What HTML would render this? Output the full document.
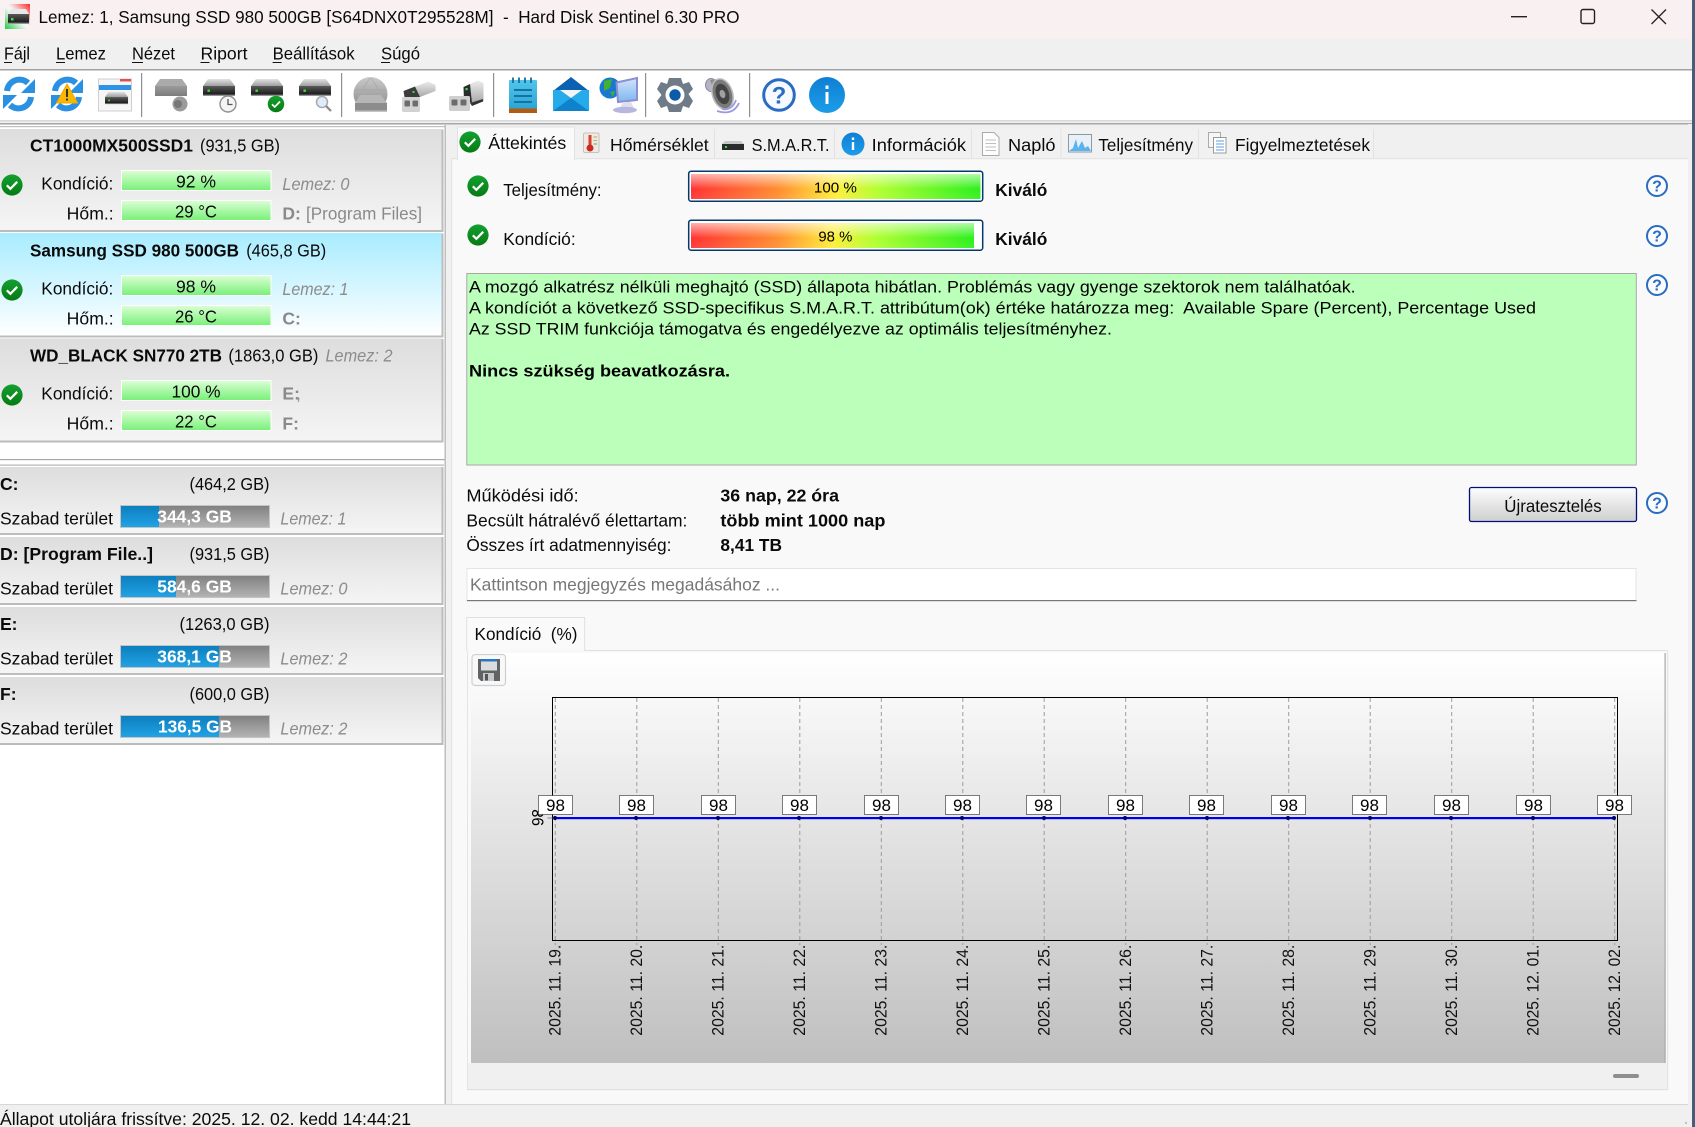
<!DOCTYPE html>
<html lang="hu"><head><meta charset="utf-8"><title>Hard Disk Sentinel</title>
<style>
html,body{margin:0;padding:0;width:1695px;height:1127px;overflow:hidden;background:#f0f0f0}
svg{display:block;position:absolute;left:0;top:0}
text{font-family:"Liberation Sans",sans-serif;fill:#0a0a0a;font-size:17.5px;white-space:pre}
.b{font-weight:700}
.g{fill:#8a8a8a}
.i{font-style:italic;fill:#8c8c8c}
.gb{font-weight:700;fill:#8a8a8a}
.w{fill:#fff;font-weight:700}
.a{font-size:16.6px;fill:#000}
.d{font-size:16.5px;fill:#111}
.l{font-size:17px;fill:#000}
.h{font-weight:700;fill:#2a6cc0;font-size:16px}
</style></head><body>
<svg width="1695" height="1127" viewBox="0 0 1695 1127" xmlns="http://www.w3.org/2000/svg">
<defs>
<linearGradient id="gb" x1="0" y1="0" x2="0" y2="1"><stop offset="0" stop-color="#dcffd6"/><stop offset="1" stop-color="#78f078"/></linearGradient>
<linearGradient id="it" x1="0" y1="0" x2="0" y2="1"><stop offset="0" stop-color="#dddddd"/><stop offset="1" stop-color="#f5f5f5"/></linearGradient>
<linearGradient id="sel" x1="0" y1="0" x2="0" y2="1"><stop offset="0" stop-color="#a8ecff"/><stop offset="1" stop-color="#ffffff"/></linearGradient>
<linearGradient id="gr" x1="0" y1="0" x2="0" y2="1"><stop offset="0" stop-color="#808080"/><stop offset="1" stop-color="#b4b4b4"/></linearGradient>
<linearGradient id="bl" x1="0" y1="0" x2="0" y2="1"><stop offset="0" stop-color="#0c7fbf"/><stop offset="1" stop-color="#22a2e4"/></linearGradient>
<linearGradient id="chart" x1="0" y1="0" x2="0" y2="1"><stop offset="0" stop-color="#ffffff"/><stop offset="1" stop-color="#bfbfbf"/></linearGradient>
<linearGradient id="btn" x1="0" y1="0" x2="0" y2="1"><stop offset="0" stop-color="#fdfdfd"/><stop offset="1" stop-color="#cfcfcf"/></linearGradient>
<linearGradient id="rg" x1="0" y1="0" x2="1" y2="0"><stop offset="0" stop-color="#ff3232"/><stop offset=".3" stop-color="#ff8c30"/><stop offset=".5" stop-color="#ffee38"/><stop offset=".65" stop-color="#b0ff30"/><stop offset="1" stop-color="#2cf01c"/></linearGradient>
<linearGradient id="sh" x1="0" y1="0" x2="0" y2="1"><stop offset="0" stop-color="#fff" stop-opacity=".62"/><stop offset=".6" stop-color="#fff" stop-opacity="0"/><stop offset="1" stop-color="#fff" stop-opacity=".08"/></linearGradient>
<linearGradient id="dt" x1="0" y1="0" x2="0" y2="1"><stop offset="0" stop-color="#e2e2e2"/><stop offset="1" stop-color="#9e9e9e"/></linearGradient>
<linearGradient id="db" x1="0" y1="0" x2="0" y2="1"><stop offset="0" stop-color="#5a5a5a"/><stop offset=".8" stop-color="#1e1e1e"/><stop offset="1" stop-color="#bbb"/></linearGradient>
<linearGradient id="dbg" x1="0" y1="0" x2="0" y2="1"><stop offset="0" stop-color="#9a9a9a"/><stop offset="1" stop-color="#7c7c7c"/></linearGradient>
<linearGradient id="ok" x1="0" y1="0" x2="0" y2="1"><stop offset="0" stop-color="#14a030"/><stop offset="1" stop-color="#067a14"/></linearGradient>
<linearGradient id="inf" x1="0" y1="0" x2="0" y2="1"><stop offset="0" stop-color="#0f7fd4"/><stop offset="1" stop-color="#1c9de8"/></linearGradient>
<linearGradient id="note" x1="0" y1="0" x2="0" y2="1"><stop offset="0" stop-color="#52c6ea"/><stop offset="1" stop-color="#2ba4d6"/></linearGradient>
<linearGradient id="tri" x1="0" y1="1" x2="1" y2="0"><stop offset="0" stop-color="#22cc44"/><stop offset=".45" stop-color="#f4f4f4"/><stop offset=".55" stop-color="#f4f4f4"/><stop offset="1" stop-color="#ff2a2a"/></linearGradient>
<linearGradient id="glb" x1="0" y1="0" x2="0" y2="1"><stop offset="0" stop-color="#cacaca"/><stop offset="1" stop-color="#858585"/></linearGradient>
<linearGradient id="scr" x1="0" y1="0" x2="0" y2="1"><stop offset="0" stop-color="#d0e4fb"/><stop offset="1" stop-color="#7fb6f0"/></linearGradient>
<linearGradient id="box" x1="0" y1="0" x2="0" y2="1"><stop offset="0" stop-color="#ececec"/><stop offset="1" stop-color="#a8a8a8"/></linearGradient>
<g id="chk"><circle r="10.6" fill="url(#ok)"/><path d="M-5.2 .3L-1.6 3.8L5.2-3.2" fill="none" stroke="#fff" stroke-width="2.2"/></g>
<g id="disk"><path d="M5 0H27L32 7H0Z" fill="url(#dt)"/><rect y="7" width="32" height="10" fill="url(#db)"/><rect x="4.5" y="10.5" width="2.4" height="2.4" fill="#35e23c"/></g>
<g id="ref"><path d="M7 91A12.5 12.5 0 0 1 28 83" fill="none" stroke="#2a90e2" stroke-width="6"/><path d="M35 79V93H21Z" fill="#2a90e2"/><path d="M31 97A12.5 12.5 0 0 1 10 105" fill="none" stroke="#2a90e2" stroke-width="6"/><path d="M3 109V95H17Z" fill="#2a90e2"/></g>
</defs>

<!-- title bar -->
<rect width="1695" height="1127" fill="#f0f0f0"/>
<rect width="1692" height="39" fill="#f8f0f1"/>
<rect x="5" y="4" width="25" height="25" fill="url(#tri)"/>
<g transform="translate(7 9)"><path d="M4 0H19L22 5H1Z" fill="#e8e8e8"/><rect x="1" y="5" width="21" height="10" fill="url(#db)"/><rect x="4" y="9" width="2.5" height="2.5" fill="#35e23c"/></g>
<text x="38.500" y="23" textLength="701" lengthAdjust="spacingAndGlyphs">Lemez: 1, Samsung SSD 980 500GB [S64DNX0T295528M]  -  Hard Disk Sentinel 6.30 PRO</text>
<rect x="1511" y="16" width="16" height="1.4" fill="#222"/>
<rect x="1581" y="9.5" width="13.5" height="14" rx="2" fill="none" stroke="#222" stroke-width="1.4"/>
<path d="M1651.5 9.500L1666 24M1666 9.500L1651.5 24" stroke="#222" stroke-width="1.3" fill="none"/>

<!-- menu -->
<rect y="39" width="1692" height="30" fill="#f0f0f0"/>
<text x="4" y="59.500" textLength="26" lengthAdjust="spacingAndGlyphs">Fájl</text><rect x="4" y="62" width="8" height="1" fill="#111"/>
<text x="56" y="59.500" textLength="50" lengthAdjust="spacingAndGlyphs">Lemez</text><rect x="56" y="62" width="9" height="1" fill="#111"/>
<text x="132" y="59.500" textLength="43" lengthAdjust="spacingAndGlyphs">Nézet</text><rect x="132" y="62" width="11" height="1" fill="#111"/>
<text x="200.500" y="59.500" textLength="47" lengthAdjust="spacingAndGlyphs">Riport</text><rect x="200.500" y="62" width="9" height="1" fill="#111"/>
<text x="272.600" y="59.500" textLength="82" lengthAdjust="spacingAndGlyphs">Beállítások</text><rect x="272.600" y="62" width="9" height="1" fill="#111"/>
<text x="381" y="59.500" textLength="39" lengthAdjust="spacingAndGlyphs">Súgó</text><rect x="381" y="62" width="9" height="1" fill="#111"/>

<!-- toolbar -->
<rect y="69" width="1692" height="1.5" fill="#a2a2a2"/>
<rect y="70.5" width="1692" height="50" fill="#fff"/>
<rect y="120" width="1692" height="1.5" fill="#d8d8d8"/>
<rect y="123" width="1692" height="1.5" fill="#a8a8a8"/>
<use href="#ref"/>
<use href="#ref" x="48"/>
<path d="M67 84L77.500 103H56.500Z" fill="#f9b800" stroke="#f2a800" stroke-width="1"/><rect x="66" y="89" width="2" height="8" fill="#333"/><rect x="66" y="98.500" width="2" height="2" fill="#333"/>
<rect x="98.500" y="79" width="33" height="32" fill="#f6f6f6" stroke="#cfcfcf"/><rect x="99" y="85" width="32" height="5" fill="#2f92e4"/><rect x="120" y="79" width="11" height="2.500" fill="#e35050"/>
<g transform="translate(105 92) scale(.72)"><use href="#disk"/></g>
<rect x="141" y="73" width="1.2" height="44" fill="#8e8e8e"/>
<g transform="translate(155 79)"><path d="M5 0H27L32 7H0Z" fill="#aaa"/><rect y="7" width="32" height="10" fill="url(#dbg)"/></g>
<circle cx="180" cy="104" r="7.500" fill="#9a9a9a"/><circle cx="178" cy="104" r="4" fill="#777"/>
<use href="#disk" x="203" y="79"/>
<circle cx="228" cy="104" r="8" fill="#f4f4f4" stroke="#8f8f8f" stroke-width="1.4"/><path d="M228 99V104.500H232.500" fill="none" stroke="#555" stroke-width="1.3"/>
<use href="#disk" x="251" y="79"/>
<g transform="translate(276 104) scale(.78)"><use href="#chk"/></g>
<use href="#disk" x="299" y="79"/>
<circle cx="322" cy="102" r="5.500" fill="#dcecfa" stroke="#a8a8a8" stroke-width="1.500"/><path d="M326 106L331 111" stroke="#888" stroke-width="2.200"/>
<rect x="341" y="73" width="1.2" height="44" fill="#8e8e8e"/>
<!-- globe disk -->
<circle cx="370.500" cy="94" r="17" fill="url(#glb)"/><path d="M362 90L370 78M379 90L371 78M354 90H387" stroke="#a4a4a4" fill="none" opacity=".7"/>
<path d="M360 95H381L387 103H355Z" fill="#b6b6b6"/><rect x="355" y="103" width="32" height="9" fill="#8c8c8c"/><rect x="355" y="110.500" width="32" height="1.500" fill="#c4c4c4"/>
<!-- dock 1 -->
<path d="M412 88L428 81.500L435.500 85V91L420 97Z" fill="url(#box)"/>
<path d="M403.500 91L415 86.500L420 97H404.500Z" fill="#3c3c3c"/><rect x="412.500" y="91" width="2" height="2" fill="#35e23c"/>
<rect x="402" y="97" width="18" height="15" rx="1.500" fill="#d2d2d2"/>
<rect x="404.500" y="100.500" width="5.500" height="6" rx="1" fill="#6c6c6c"/><rect x="412.500" y="100.500" width="5.500" height="6" rx="1" fill="#6c6c6c"/>
<!-- dock 2 -->
<path d="M470 84L478 80.500L483.500 83V101L472 103Z" fill="url(#box)"/>
<path d="M463.500 87L470 84L472 103L464 101Z" fill="#2c2c2c"/><rect x="465.500" y="88" width="2.200" height="2.200" fill="#35e23c"/>
<path d="M470 103L483 99V101.500L472 106Z" fill="#333"/>
<rect x="449" y="96" width="21" height="15" rx="1.500" fill="#cfcfcf"/>
<rect x="451.500" y="99.500" width="6" height="6" rx="1" fill="#6c6c6c"/><rect x="460.500" y="99.500" width="6" height="6" rx="1" fill="#6c6c6c"/>
<rect x="493" y="73" width="1.2" height="44" fill="#8e8e8e"/>
<rect x="509" y="80" width="28" height="29" rx="1" fill="url(#note)"/><rect x="509" y="108.500" width="28" height="4.500" fill="#b15c0e"/>
<path d="M513 77.500V83M519 77.500V83M525 77.500V83M531 77.500V83" stroke="#146ca0" stroke-width="1.800"/>
<path d="M514 90H532M514 96H532M514 102H532" stroke="#16739f" stroke-width="2"/>
<path d="M553 91L571 77L589 91Z" fill="#0b62b2"/><rect x="553" y="90" width="36" height="21" fill="#25abe9"/><path d="M560 90H582L571 98Z" fill="#f4f4f4"/><path d="M553 111L571 98L589 111Z" fill="#0f82cd"/>
<!-- globe + monitor -->
<circle cx="610" cy="88" r="10.500" fill="#1a78d0"/><path d="M604 81L612 79L610 88L604 91Z" fill="#43b02f"/><path d="M610 92L615 91L613 97Z" fill="#43b02f"/>
<path d="M616.500 82.500L637 78V100L618 102Z" fill="url(#scr)" stroke="#8d8fd0" stroke-width="2"/>
<path d="M623 102H631L634 108H620Z" fill="#dedeee"/><ellipse cx="625" cy="110" rx="12" ry="3.200" fill="#b6b6de"/>
<rect x="645" y="73" width="1.2" height="44" fill="#8e8e8e"/>
<path d="M669 78H681L683 84L689 82L693 89L688.500 94L693 101L689 108L683 106L681 112H669L667 106L661 108L657 101L661.500 95L657 89L661 82L667 84Z" fill="#6f7c88"/><circle cx="675" cy="95" r="9.500" fill="#fff"/><circle cx="675" cy="95" r="5.700" fill="#0a5cab"/>
<!-- speaker -->
<ellipse cx="711" cy="85" rx="5.500" ry="6.500" fill="#b4b4c6" stroke="#8a8aa0"/>
<path d="M710 80L722 78.500L732 92L728 109L714 90Z" fill="#8c8c8c"/>
<ellipse cx="722.500" cy="94" rx="10" ry="15.500" transform="rotate(-18 722.500 94)" fill="#7a7a7a" stroke="#bcbcbc" stroke-width="1.500"/>
<ellipse cx="722.500" cy="94" rx="6.500" ry="10.500" transform="rotate(-18 722.500 94)" fill="#444"/>
<ellipse cx="722.500" cy="94" rx="2.800" ry="4.200" transform="rotate(-18 722.500 94)" fill="#a0a0a0"/>
<path d="M722 109Q732 111 736 100M717 111Q733 116 739 103" fill="none" stroke="#9a9ae0" stroke-width="1.800"/>
<rect x="749" y="73" width="1.2" height="44" fill="#8e8e8e"/>
<circle cx="779" cy="95" r="15.300" fill="#f6f9ff" stroke="#2a6cc4" stroke-width="3"/><text x="779" y="103.500" text-anchor="middle" style="font-size:24px;font-weight:700;fill:#2a6cc4">?</text>
<circle cx="827" cy="95" r="18" fill="url(#inf)"/><rect x="825.500" y="92" width="3" height="12" fill="#fff"/><rect x="825.500" y="85.500" width="3" height="3.500" fill="#fff"/>

<!-- left panel -->
<rect x="0" y="125" width="445" height="979" fill="#fff"/>
<rect x="0" y="126" width="445" height="1.200" fill="#c0c0c0"/>
<rect x="444.600" y="125" width="1.200" height="979" fill="#a9a9a9"/>
<rect x="445.800" y="125" width="5.400" height="979" fill="#f0f0f0"/>

<rect x="0" y="129" width="442" height="102" fill="url(#it)"/>
<rect x="0" y="233" width="442" height="103" fill="url(#sel)"/>
<rect x="0" y="338.500" width="442" height="103" fill="url(#it)"/>
<path d="M0 231H442.500V129.500M0 336.500H442.500V233.500M0 441.500H442.500V339" fill="none" stroke="#bcbcbc" stroke-width="2"/>

<!-- disk 1 -->
<text class="b" x="30" y="151.500" textLength="163" lengthAdjust="spacingAndGlyphs">CT1000MX500SSD1</text>
<text x="200" y="151.500" textLength="80" lengthAdjust="spacingAndGlyphs">(931,5 GB)</text>
<use href="#chk" x="12" y="185"/>
<text x="41.300" y="189.700" textLength="72" lengthAdjust="spacingAndGlyphs">Kondíció:</text>
<text x="66.700" y="219.700" textLength="47" lengthAdjust="spacingAndGlyphs">Hőm.:</text>
<rect x="121.500" y="170.500" width="149.500" height="20" fill="url(#gb)" stroke="#fff"/>
<rect x="121.500" y="200.500" width="149.500" height="20" fill="url(#gb)" stroke="#fff"/>
<text x="196" y="187.700" text-anchor="middle" textLength="40" lengthAdjust="spacingAndGlyphs">92 %</text>
<text x="196" y="217.700" text-anchor="middle" textLength="42" lengthAdjust="spacingAndGlyphs">29 °C</text>
<text class="i" x="282.400" y="190" textLength="67" lengthAdjust="spacingAndGlyphs">Lemez: 0</text>
<text class="gb" x="282.400" y="219.700">D:</text>
<text class="g" x="306" y="219.700" textLength="116" lengthAdjust="spacingAndGlyphs">[Program Files]</text>

<!-- disk 2 -->
<text class="b" x="30" y="256.500" textLength="209" lengthAdjust="spacingAndGlyphs">Samsung SSD 980 500GB</text>
<text x="246.200" y="256.500" textLength="80" lengthAdjust="spacingAndGlyphs">(465,8 GB)</text>
<use href="#chk" x="12" y="290"/>
<text x="41.300" y="294.700" textLength="72" lengthAdjust="spacingAndGlyphs">Kondíció:</text>
<text x="66.700" y="324.700" textLength="47" lengthAdjust="spacingAndGlyphs">Hőm.:</text>
<rect x="121.500" y="275.500" width="149.500" height="20" fill="url(#gb)" stroke="#fff"/>
<rect x="121.500" y="305.500" width="149.500" height="20" fill="url(#gb)" stroke="#fff"/>
<text x="196" y="292.700" text-anchor="middle" textLength="40" lengthAdjust="spacingAndGlyphs">98 %</text>
<text x="196" y="322.700" text-anchor="middle" textLength="42" lengthAdjust="spacingAndGlyphs">26 °C</text>
<text class="i" x="282.400" y="295" textLength="66" lengthAdjust="spacingAndGlyphs">Lemez: 1</text>
<text class="gb" x="282.400" y="324.700">C:</text>

<!-- disk 3 -->
<text class="b" x="30" y="361.500" textLength="192" lengthAdjust="spacingAndGlyphs">WD_BLACK SN770 2TB</text>
<text x="228.400" y="361.500" textLength="90" lengthAdjust="spacingAndGlyphs">(1863,0 GB)</text>
<text class="i" x="325.500" y="361.500" textLength="67" lengthAdjust="spacingAndGlyphs">Lemez: 2</text>
<use href="#chk" x="12" y="395"/>
<text x="41.300" y="399.700" textLength="72" lengthAdjust="spacingAndGlyphs">Kondíció:</text>
<text x="66.700" y="429.700" textLength="47" lengthAdjust="spacingAndGlyphs">Hőm.:</text>
<rect x="121.500" y="380.500" width="149.500" height="20" fill="url(#gb)" stroke="#fff"/>
<rect x="121.500" y="410.500" width="149.500" height="20" fill="url(#gb)" stroke="#fff"/>
<text x="196" y="397.700" text-anchor="middle" textLength="49" lengthAdjust="spacingAndGlyphs">100 %</text>
<text x="196" y="427.700" text-anchor="middle" textLength="42" lengthAdjust="spacingAndGlyphs">22 °C</text>
<text class="gb" x="282.400" y="399.700">E:</text><text class="g" x="296" y="399.700">,</text>
<text class="gb" x="282.400" y="429.700">F:</text>

<rect x="0" y="459" width="445" height="1.200" fill="#a9a9a9"/>
<rect x="0" y="464.500" width="444" height="1.200" fill="#b4b4b4"/>

<!-- volumes -->
<rect x="0" y="467" width="442" height="67" fill="url(#it)"/>
<rect x="0" y="537" width="442" height="67" fill="url(#it)"/>
<rect x="0" y="607" width="442" height="67" fill="url(#it)"/>
<rect x="0" y="677" width="442" height="67" fill="url(#it)"/>
<path d="M0 534H442.500V467M0 604H442.500V537M0 674H442.500V607M0 744H442.500V677" fill="none" stroke="#bcbcbc" stroke-width="2"/>

<text class="b" x="0" y="490">C:</text>
<text x="189.500" y="490" textLength="80" lengthAdjust="spacingAndGlyphs">(464,2 GB)</text>
<text x="0" y="524.500" textLength="113" lengthAdjust="spacingAndGlyphs">Szabad terület</text>
<rect x="120.500" y="505.500" width="149" height="22" fill="url(#gr)" stroke="#c4c4c4"/><rect x="121" y="506" width="38" height="21" fill="url(#bl)"/>
<text class="w" x="157.300" y="522.500" textLength="74.500" lengthAdjust="spacingAndGlyphs">344,3 GB</text>
<text class="i" x="280.400" y="524.500" textLength="66" lengthAdjust="spacingAndGlyphs">Lemez: 1</text>

<text class="b" x="0" y="560" textLength="153" lengthAdjust="spacingAndGlyphs">D: [Program File..]</text>
<text x="189.500" y="560" textLength="80" lengthAdjust="spacingAndGlyphs">(931,5 GB)</text>
<text x="0" y="594.500" textLength="113" lengthAdjust="spacingAndGlyphs">Szabad terület</text>
<rect x="120.500" y="575.500" width="149" height="22" fill="url(#gr)" stroke="#c4c4c4"/><rect x="121" y="576" width="55" height="21" fill="url(#bl)"/>
<text class="w" x="157.300" y="592.500" textLength="74.500" lengthAdjust="spacingAndGlyphs">584,6 GB</text>
<text class="i" x="280.400" y="594.500" textLength="67" lengthAdjust="spacingAndGlyphs">Lemez: 0</text>

<text class="b" x="0" y="630">E:</text>
<text x="179.500" y="630" textLength="90" lengthAdjust="spacingAndGlyphs">(1263,0 GB)</text>
<text x="0" y="664.500" textLength="113" lengthAdjust="spacingAndGlyphs">Szabad terület</text>
<rect x="120.500" y="645.500" width="149" height="22" fill="url(#gr)" stroke="#c4c4c4"/><rect x="121" y="646" width="98" height="21" fill="url(#bl)"/>
<text class="w" x="157.300" y="662.500" textLength="74.500" lengthAdjust="spacingAndGlyphs">368,1 GB</text>
<text class="i" x="280.400" y="664.500" textLength="67" lengthAdjust="spacingAndGlyphs">Lemez: 2</text>

<text class="b" x="0" y="700">F:</text>
<text x="189.500" y="700" textLength="80" lengthAdjust="spacingAndGlyphs">(600,0 GB)</text>
<text x="0" y="734.500" textLength="113" lengthAdjust="spacingAndGlyphs">Szabad terület</text>
<rect x="120.500" y="715.500" width="149" height="22" fill="url(#gr)" stroke="#c4c4c4"/><rect x="121" y="716" width="98" height="21" fill="url(#bl)"/>
<text class="w" x="158" y="732.500" textLength="74" lengthAdjust="spacingAndGlyphs">136,5 GB</text>
<text class="i" x="280.400" y="734.500" textLength="67" lengthAdjust="spacingAndGlyphs">Lemez: 2</text>

<!-- right panel -->
<rect x="451" y="159" width="1237" height="945" fill="#f9f9f9"/>
<rect x="451" y="159" width="1.200" height="945" fill="#e6e6e6"/>
<rect x="451" y="158" width="1241" height="1.200" fill="#e4e4e4"/>

<!-- tabs -->
<rect x="458" y="129" width="916" height="29" fill="#f1f1f1"/>
<path d="M714.500 129V158M834.500 129V158M971.500 129V158M1061 129V158M1198.500 129V158M1373.500 129V158" stroke="#e2e2e2" fill="none"/>
<rect x="457.500" y="127" width="117" height="33" fill="#fafafa" stroke="#e2e2e2"/>
<rect x="458" y="157" width="116" height="4" fill="#f9f9f9"/>
<use href="#chk" x="470" y="142"/>
<text x="488.300" y="149" textLength="78" lengthAdjust="spacingAndGlyphs">Áttekintés</text>
<rect x="583.500" y="133" width="15.500" height="19.500" rx="1.500" fill="#eee9e4" stroke="#c8c0ba"/><rect x="588.500" y="135" width="3" height="12" fill="#d84030"/><circle cx="590" cy="148" r="3.500" fill="#cc2a20"/><path d="M593.500 137H597" stroke="#d8a030"/><path d="M593.500 140.500H597" stroke="#a8c040"/><path d="M593.500 144H597" stroke="#60b050"/>
<text x="610" y="151" textLength="98.700" lengthAdjust="spacingAndGlyphs">Hőmérséklet</text>
<path d="M725 141H741L744 144H722Z" fill="#c8c8c8"/><rect x="722" y="144" width="22" height="6" fill="#2a2a2a"/><rect x="725" y="146" width="2" height="2" fill="#35e23c"/>
<text x="751.600" y="151" textLength="78" lengthAdjust="spacingAndGlyphs">S.M.A.R.T.</text>
<circle cx="853" cy="144" r="11.500" fill="url(#inf)"/><rect x="851.800" y="142" width="2.400" height="8" fill="#fff"/><rect x="851.800" y="137.500" width="2.400" height="2.500" fill="#fff"/>
<text x="871.700" y="151" textLength="94.300" lengthAdjust="spacingAndGlyphs">Információk</text>
<path d="M982.500 132.500H994L999 137.500V155.500H982.500Z" fill="#fdfdfd" stroke="#aaa"/><path d="M985.500 140H996M985.500 143.500H996M985.500 147H996M985.500 150.500H996" stroke="#c0c0c0"/>
<text x="1008" y="151" textLength="47.500" lengthAdjust="spacingAndGlyphs">Napló</text>
<rect x="1068.500" y="134.500" width="23" height="17.500" fill="#e8f0f8" stroke="#8f98a0"/><path d="M1069 151L1073 148L1076 139L1078 148L1082 141L1085 148L1088 146L1091 151Z" fill="#58b4ee"/>
<text x="1098.400" y="151" textLength="94.600" lengthAdjust="spacingAndGlyphs">Teljesítmény</text>
<rect x="1208.500" y="132.500" width="12" height="15" fill="#f6f6f6" stroke="#aaa"/><rect x="1213.500" y="137.500" width="12.500" height="15.500" fill="#fff" stroke="#999"/><path d="M1216 141H1224M1216 144H1224M1216 147H1224M1216 150H1224" stroke="#5a9ce8"/>
<text x="1235" y="151" textLength="135" lengthAdjust="spacingAndGlyphs">Figyelmeztetések</text>

<!-- overview -->
<use href="#chk" x="478" y="186"/>
<text x="503.200" y="196" textLength="98.400" lengthAdjust="spacingAndGlyphs">Teljesítmény:</text>
<rect x="688.700" y="171.200" width="294" height="30" rx="2.500" fill="#fff" stroke="#03396c" stroke-width="1.500"/>
<rect x="691" y="174" width="289.500" height="25" fill="url(#rg)"/><rect x="691" y="174" width="289.500" height="25" fill="url(#sh)"/>
<text class="a" x="835.400" y="192.500" text-anchor="middle" textLength="43" lengthAdjust="spacingAndGlyphs" style="font-size:15px">100 %</text>
<text class="b" x="995.300" y="196" textLength="52" lengthAdjust="spacingAndGlyphs">Kiváló</text>
<use href="#chk" x="478" y="235"/>
<text x="503.200" y="245" textLength="72.500" lengthAdjust="spacingAndGlyphs">Kondíció:</text>
<rect x="688.700" y="220.200" width="294" height="30" rx="2.500" fill="#fff" stroke="#03396c" stroke-width="1.500"/>
<rect x="691" y="223" width="283" height="25" fill="url(#rg)"/><rect x="691" y="223" width="283" height="25" fill="url(#sh)"/>
<text class="a" x="835.400" y="241.500" text-anchor="middle" textLength="34" lengthAdjust="spacingAndGlyphs" style="font-size:15px">98 %</text>
<text class="b" x="995.300" y="245" textLength="52" lengthAdjust="spacingAndGlyphs">Kiváló</text>

<circle cx="1657" cy="186" r="10" fill="#fbfcff" stroke="#2a6cc0" stroke-width="2"/><text class="h" x="1657" y="191.600" text-anchor="middle">?</text>
<circle cx="1657" cy="236" r="10" fill="#fbfcff" stroke="#2a6cc0" stroke-width="2"/><text class="h" x="1657" y="241.600" text-anchor="middle">?</text>
<circle cx="1657" cy="285" r="10" fill="#fbfcff" stroke="#2a6cc0" stroke-width="2"/><text class="h" x="1657" y="290.600" text-anchor="middle">?</text>
<circle cx="1657" cy="503" r="10" fill="#fbfcff" stroke="#2a6cc0" stroke-width="2"/><text class="h" x="1657" y="508.600" text-anchor="middle">?</text>

<rect x="466.800" y="273.500" width="1169.500" height="191.500" fill="#bbffbb" stroke="#a8a8a8"/>
<text class="a" x="469" y="292.500" textLength="886.600" lengthAdjust="spacingAndGlyphs">A mozgó alkatrész nélküli meghajtó (SSD) állapota hibátlan. Problémás vagy gyenge szektorok nem találhatóak.</text>
<text class="a" x="469" y="313.500" textLength="1067" lengthAdjust="spacingAndGlyphs">A kondíciót a következő SSD-specifikus S.M.A.R.T. attribútum(ok) értéke határozza meg:  Available Spare (Percent), Percentage Used</text>
<text class="a" x="469" y="334.500" textLength="643" lengthAdjust="spacingAndGlyphs">Az SSD TRIM funkciója támogatva és engedélyezve az optimális teljesítményhez.</text>
<text class="a" x="469" y="376.500" textLength="261" lengthAdjust="spacingAndGlyphs" style="font-weight:700">Nincs szükség beavatkozásra.</text>

<text x="466.400" y="501.700" textLength="112.300" lengthAdjust="spacingAndGlyphs">Működési idő:</text>
<text x="466.400" y="526.700" textLength="221" lengthAdjust="spacingAndGlyphs">Becsült hátralévő élettartam:</text>
<text x="466.400" y="551" textLength="205" lengthAdjust="spacingAndGlyphs">Összes írt adatmennyiség:</text>
<text class="b" x="720.400" y="501.700" textLength="118.600" lengthAdjust="spacingAndGlyphs">36 nap, 22 óra</text>
<text class="b" x="720.400" y="526.700" textLength="165" lengthAdjust="spacingAndGlyphs">több mint 1000 nap</text>
<text class="b" x="720.400" y="551" textLength="61.600" lengthAdjust="spacingAndGlyphs">8,41 TB</text>

<rect x="1469.500" y="487.500" width="167" height="34" rx="2" fill="url(#btn)" stroke="#00107a" stroke-width="1.300"/>
<text x="1504.300" y="512" textLength="97.400" lengthAdjust="spacingAndGlyphs">Újratesztelés</text>

<rect x="467" y="568.500" width="1169" height="32" fill="#fff" stroke="#e4e4e4"/>
<rect x="467" y="600" width="1169.500" height="1.200" fill="#777"/>
<text x="470" y="590.700" textLength="310" lengthAdjust="spacingAndGlyphs" style="fill:#777">Kattintson megjegyzés megadásához ...</text>

<!-- chart tab -->
<rect x="467" y="650" width="1200.500" height="1" fill="#e0e0e0"/>
<rect x="467" y="651" width="1" height="439" fill="#e4e4e4"/>
<rect x="466.700" y="617.500" width="118" height="33" fill="#fafafa" stroke="#e0e0e0"/>
<rect x="467.500" y="649" width="116.500" height="3" fill="#f9f9f9"/>
<text x="474.500" y="640" textLength="103" lengthAdjust="spacingAndGlyphs">Kondíció  (%)</text>

<rect x="471" y="653" width="1194" height="410" fill="url(#chart)"/>
<rect x="1664.500" y="653" width="1.200" height="410" fill="#a8a8a8"/>
<rect x="468" y="1063" width="1199" height="26" fill="#f0f0f0"/>
<rect x="468" y="1089" width="1199.500" height="1.200" fill="#e0e0e0"/>
<rect x="1667" y="651" width="1.200" height="439" fill="#e4e4e4"/>
<rect x="1613" y="1074" width="26" height="4" rx="2" fill="#8e8e8e"/>

<!-- save button -->
<rect x="472" y="654.500" width="33.500" height="31" rx="3" fill="#f8f8f8" stroke="#cfcfcf" stroke-width="1.200"/>
<path d="M478 659H500V681H481L478 678Z" fill="#5f6366"/><rect x="481" y="659" width="16" height="2.500" fill="#2878c8"/><rect x="481" y="661.500" width="16" height="9" fill="#dcdcdc"/><rect x="483" y="673" width="11" height="8" fill="#c8c8c8"/><rect x="485" y="674" width="3" height="6.500" fill="#555"/>

<!-- chart frame & grid -->
<g stroke="#9c9c9c" stroke-width="1" stroke-dasharray="4 3" fill="none">
<path d="M555.300 698V945M636.800 698V945M718.300 698V945M799.800 698V945M881.300 698V945M962.800 698V945M1044.200 698V945M1125.700 698V945M1207.200 698V945M1288.700 698V945M1370.200 698V945M1451.700 698V945M1533.200 698V945M1614.700 698V945"/>
</g>
<path d="M552.500 940.500V697.500H1617.500V940.500Z" fill="none" stroke="#000" stroke-width="1" shape-rendering="crispEdges"/>
<rect x="547.500" y="817.500" width="5" height="1" fill="#888"/>
<text x="543.600" y="826" transform="rotate(-90 543.600 826)" style="font-size:16.500px;fill:#000" textLength="17" lengthAdjust="spacingAndGlyphs">98</text>
<rect x="555" y="817" width="1060" height="2.200" fill="#0000f0"/>
<g fill="#00006a">
<circle cx="555" cy="818" r="2"/><circle cx="636" cy="818" r="2"/><circle cx="718" cy="818" r="2"/><circle cx="799" cy="818" r="2"/><circle cx="881" cy="818" r="2"/><circle cx="962" cy="818" r="2"/><circle cx="1044" cy="818" r="2"/><circle cx="1125" cy="818" r="2"/><circle cx="1207" cy="818" r="2"/><circle cx="1288" cy="818" r="2"/><circle cx="1370" cy="818" r="2"/><circle cx="1451" cy="818" r="2"/><circle cx="1533" cy="818" r="2"/><circle cx="1614" cy="818" r="2"/>
</g>
<g fill="#fff" stroke="#000" stroke-width="1" stroke-dasharray="1 1" shape-rendering="crispEdges">
<rect x="538.500" y="795.500" width="34" height="19"/><rect x="619.500" y="795.500" width="34" height="19"/><rect x="701.500" y="795.500" width="34" height="19"/><rect x="782.500" y="795.500" width="34" height="19"/><rect x="864.500" y="795.500" width="34" height="19"/><rect x="945.500" y="795.500" width="34" height="19"/><rect x="1026.500" y="795.500" width="34" height="19"/><rect x="1108.500" y="795.500" width="34" height="19"/><rect x="1189.500" y="795.500" width="34" height="19"/><rect x="1271.500" y="795.500" width="34" height="19"/><rect x="1352.500" y="795.500" width="34" height="19"/><rect x="1434.500" y="795.500" width="34" height="19"/><rect x="1516.500" y="795.500" width="34" height="19"/><rect x="1597.500" y="795.500" width="34" height="19"/>
</g>
<g text-anchor="middle">
<text class="l" x="555.500" y="811">98</text><text class="l" x="636.500" y="811">98</text><text class="l" x="718.500" y="811">98</text><text class="l" x="799.500" y="811">98</text><text class="l" x="881.500" y="811">98</text><text class="l" x="962.500" y="811">98</text><text class="l" x="1043.500" y="811">98</text><text class="l" x="1125.500" y="811">98</text><text class="l" x="1206.500" y="811">98</text><text class="l" x="1288.500" y="811">98</text><text class="l" x="1369.500" y="811">98</text><text class="l" x="1451.500" y="811">98</text><text class="l" x="1533.500" y="811">98</text><text class="l" x="1614.500" y="811">98</text>
</g>
<text class="d" x="560.500" y="1035.700" transform="rotate(-90 560.500 1035.700)" textLength="91" lengthAdjust="spacingAndGlyphs">2025. 11. 19.</text>
<text class="d" x="642" y="1035.700" transform="rotate(-90 642 1035.700)" textLength="91" lengthAdjust="spacingAndGlyphs">2025. 11. 20.</text>
<text class="d" x="723.500" y="1035.700" transform="rotate(-90 723.500 1035.700)" textLength="91" lengthAdjust="spacingAndGlyphs">2025. 11. 21.</text>
<text class="d" x="805" y="1035.700" transform="rotate(-90 805 1035.700)" textLength="91" lengthAdjust="spacingAndGlyphs">2025. 11. 22.</text>
<text class="d" x="886.500" y="1035.700" transform="rotate(-90 886.500 1035.700)" textLength="91" lengthAdjust="spacingAndGlyphs">2025. 11. 23.</text>
<text class="d" x="968" y="1035.700" transform="rotate(-90 968 1035.700)" textLength="91" lengthAdjust="spacingAndGlyphs">2025. 11. 24.</text>
<text class="d" x="1049.400" y="1035.700" transform="rotate(-90 1049.400 1035.700)" textLength="91" lengthAdjust="spacingAndGlyphs">2025. 11. 25.</text>
<text class="d" x="1130.900" y="1035.700" transform="rotate(-90 1130.900 1035.700)" textLength="91" lengthAdjust="spacingAndGlyphs">2025. 11. 26.</text>
<text class="d" x="1212.400" y="1035.700" transform="rotate(-90 1212.400 1035.700)" textLength="91" lengthAdjust="spacingAndGlyphs">2025. 11. 27.</text>
<text class="d" x="1293.900" y="1035.700" transform="rotate(-90 1293.900 1035.700)" textLength="91" lengthAdjust="spacingAndGlyphs">2025. 11. 28.</text>
<text class="d" x="1375.400" y="1035.700" transform="rotate(-90 1375.400 1035.700)" textLength="91" lengthAdjust="spacingAndGlyphs">2025. 11. 29.</text>
<text class="d" x="1456.900" y="1035.700" transform="rotate(-90 1456.900 1035.700)" textLength="91" lengthAdjust="spacingAndGlyphs">2025. 11. 30.</text>
<text class="d" x="1538.400" y="1035.700" transform="rotate(-90 1538.400 1035.700)" textLength="91" lengthAdjust="spacingAndGlyphs">2025. 12. 01.</text>
<text class="d" x="1619.900" y="1035.700" transform="rotate(-90 1619.900 1035.700)" textLength="91" lengthAdjust="spacingAndGlyphs">2025. 12. 02.</text>

<!-- status bar -->
<rect x="0" y="1104" width="1692" height="1.200" fill="#d8d8d8"/>
<rect x="0" y="1105.200" width="1692" height="22" fill="#f0f0f0"/>
<text x="0" y="1125" textLength="411" lengthAdjust="spacingAndGlyphs">Állapot utoljára frissítve: 2025. 12. 02. kedd 14:44:21</text>
<g fill="#c0c0c0"><rect x="1689" y="1118" width="2" height="2"/><rect x="1689" y="1122" width="2" height="2"/><rect x="1685" y="1122" width="2" height="2"/></g>

<!-- window edge -->
<rect x="1688" y="124" width="4" height="1003" fill="#f0f0f0"/>
<rect x="1692" y="0" width="3" height="1127" fill="#4a5c78"/>
</svg>
</body></html>
